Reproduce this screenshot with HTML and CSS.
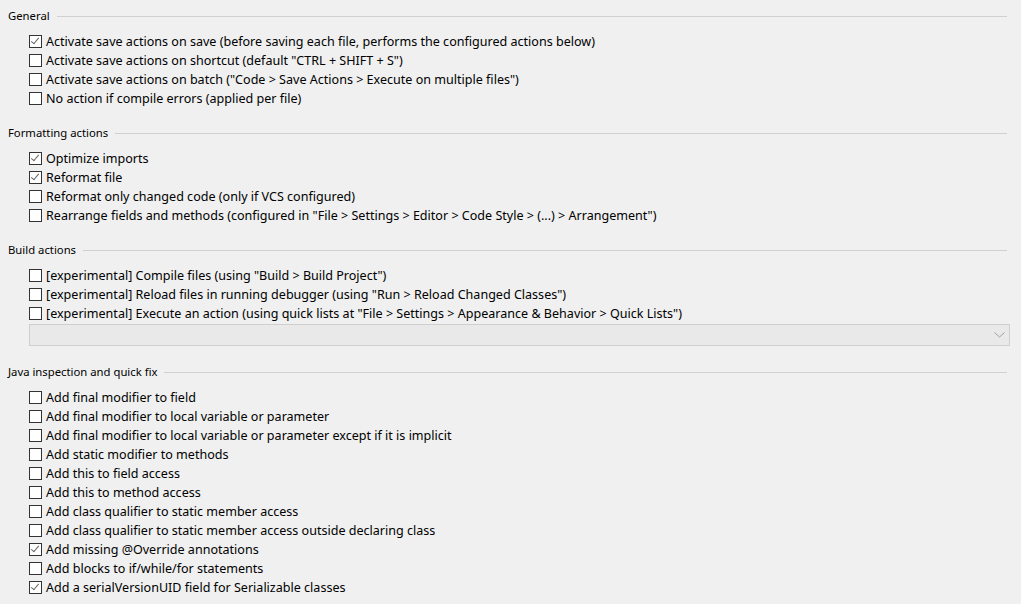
FILE: index.html
```html
<!DOCTYPE html>
<html>
<head>
<meta charset="utf-8">
<link rel="stylesheet" href="styles.css">
</head>
<body>
<div class="page">
  <section class="group">
    <div class="title"><span>General</span><i class="rule"></i></div>
    <div class="list">
      <label class="row"><span class="cb on"></span><span>Activate save actions on save (before saving each file, performs the configured actions below)</span></label>
      <label class="row"><span class="cb"></span><span>Activate save actions on shortcut (default "CTRL + SHIFT + S")</span></label>
      <label class="row"><span class="cb"></span><span>Activate save actions on batch ("Code &gt; Save Actions &gt; Execute on multiple files")</span></label>
      <label class="row"><span class="cb"></span><span>No action if compile errors (applied per file)</span></label>
    </div>
  </section>
  <section class="group">
    <div class="title"><span>Formatting actions</span><i class="rule"></i></div>
    <div class="list">
      <label class="row"><span class="cb on"></span><span>Optimize imports</span></label>
      <label class="row"><span class="cb on"></span><span>Reformat file</span></label>
      <label class="row"><span class="cb"></span><span>Reformat only changed code (only if VCS configured)</span></label>
      <label class="row"><span class="cb"></span><span>Rearrange fields and methods (configured in "File &gt; Settings &gt; Editor &gt; Code Style &gt; (...) &gt; Arrangement")</span></label>
    </div>
  </section>
  <section class="group build">
    <div class="title"><span>Build actions</span><i class="rule"></i></div>
    <div class="list">
      <label class="row"><span class="cb"></span><span>[experimental] Compile files (using "Build &gt; Build Project")</span></label>
      <label class="row"><span class="cb"></span><span>[experimental] Reload files in running debugger (using "Run &gt; Reload Changed Classes")</span></label>
      <label class="row"><span class="cb"></span><span>[experimental] Execute an action (using quick lists at "File &gt; Settings &gt; Appearance &amp; Behavior &gt; Quick Lists")</span></label>
      <div class="combo"><svg class="chev" width="11" height="6" viewBox="0 0 11 6"><path d="M0.5 0.5 L5.5 5 L10.5 0.5" fill="none" stroke="#a0a0a0" stroke-width="1"/></svg></div>
    </div>
  </section>
  <section class="group">
    <div class="title"><span>Java inspection and quick fix</span><i class="rule"></i></div>
    <div class="list">
      <label class="row"><span class="cb"></span><span>Add final modifier to field</span></label>
      <label class="row"><span class="cb"></span><span>Add final modifier to local variable or parameter</span></label>
      <label class="row"><span class="cb"></span><span>Add final modifier to local variable or parameter except if it is implicit</span></label>
      <label class="row"><span class="cb"></span><span>Add static modifier to methods</span></label>
      <label class="row"><span class="cb"></span><span>Add this to field access</span></label>
      <label class="row"><span class="cb"></span><span>Add this to method access</span></label>
      <label class="row"><span class="cb"></span><span>Add class qualifier to static member access</span></label>
      <label class="row"><span class="cb"></span><span>Add class qualifier to static member access outside declaring class</span></label>
      <label class="row"><span class="cb on"></span><span>Add missing @Override annotations</span></label>
      <label class="row"><span class="cb"></span><span>Add blocks to if/while/for statements</span></label>
      <label class="row"><span class="cb on"></span><span>Add a serialVersionUID field for Serializable classes</span></label>
    </div>
  </section>
</div>
</body>
</html>
```
FILE: styles.css
```css
html, body {
  margin: 0;
  padding: 0;
  background: #f0f0f0;
}
body {
  font-family: "Noto Sans", "Open Sans", sans-serif;
  font-size: 12.55px;
  color: #000;
  overflow: hidden;
}
.page {
  padding: 7px 0 0 8px;
  width: 1021px;
  height: 604px;
  box-sizing: border-box;
}
.group {
  padding-bottom: 16px;
}
.group.build {
  padding-bottom: 17px;
}
.title {
  display: flex;
  align-items: center;
  height: 18px;
  line-height: 18px;
  font-size: 11.3px;
  margin-right: 14px;
  gap: 7px;
}
.rule {
  flex: 1;
  height: 1px;
  background: #d0d0d0;
}
.list {
  padding: 7px 0 0 21px;
}
.row {
  display: flex;
  align-items: center;
  height: 19px;
  line-height: 19px;
  white-space: nowrap;
  gap: 4px;
}
.cb {
  position: relative;
  flex: none;
  width: 13px;
  height: 13px;
  box-sizing: border-box;
  border: 1px solid #333;
  background: #fff;
}
.cb.on::after {
  content: "";
  position: absolute;
  left: 3px;
  top: 0px;
  width: 3px;
  height: 7px;
  border-right: 1px solid #666;
  border-bottom: 1px solid #666;
  transform: rotate(40deg);
  transform-origin: center;
}
.combo {
  display: flex;
  align-items: center;
  justify-content: flex-end;
  margin: 1px 11px 0 0;
  height: 22px;
  box-sizing: border-box;
  border: 1px solid #cfcfcf;
  background: #e9e9e9;
  padding-right: 4px;
}
```
